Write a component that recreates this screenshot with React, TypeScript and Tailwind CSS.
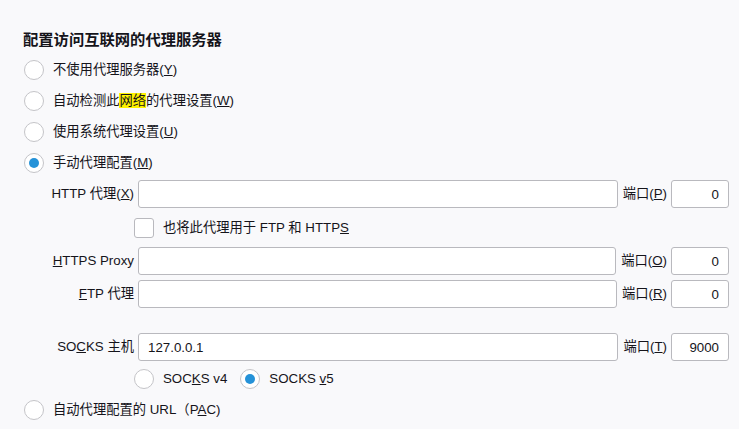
import React from 'react';

const Radio: React.FC<{ checked?: boolean }> = ({ checked }) => (
  <span className="flex h-[20px] w-[20px] shrink-0 items-center justify-center rounded-full border-[1.5px] border-[#c4c4c8] bg-white">
    {checked && <span className="h-[10px] w-[10px] rounded-full bg-[#2592d8]" />}
  </span>
);

const RadioRow: React.FC<{ checked?: boolean; children: React.ReactNode }> = ({ checked, children }) => (
  <div className="flex h-[31px] items-center pl-[24px]">
    <Radio checked={checked} />
    <span className="ml-[9px]">{children}</span>
  </div>
);

const ProxyRow: React.FC<{
  label: React.ReactNode;
  value?: string;
  portLabel: React.ReactNode;
  port: string;
  className?: string;
}> = ({ label, value = '', portLabel, port, className = '' }) => (
  <div className={`flex h-[28px] items-center pr-[10px] ${className}`}>
    <div className="w-[138px] shrink-0 pr-[4px] text-right">{label}</div>
    <input
      readOnly
      value={value}
      className="h-[28px] min-w-0 flex-1 rounded-[3px] border border-[#b9b9be] bg-white pl-[9px] text-[#15141a] outline-none"
    />
    <span className="ml-[5px] mr-[4px] shrink-0">{portLabel}</span>
    <input
      readOnly
      value={port}
      className="h-[28px] w-[58px] shrink-0 rounded-[3px] border border-[#b9b9be] bg-white pr-[9px] text-right text-[#15141a] outline-none"
    />
  </div>
);

export default function App() {
  return (
    <div
      className="h-[429px] w-[739px] overflow-hidden bg-[#f9f9fb] text-[13.3px] leading-[20px] text-[#15141a]"
      style={{ fontFamily: '"Liberation Sans", "Noto Sans CJK SC", sans-serif' }}
    >
      <div className="pt-[29px]">
        <h1 className="pl-[23px] text-[15.3px] font-bold leading-[22px]">配置访问互联网的代理服务器</h1>
        <div className="mt-[3px]">
          <RadioRow>不使用代理服务器(<u>Y</u>)</RadioRow>
          <RadioRow>
            自动检测此<span className="bg-[#fff200]">网络</span>的代理设置(<u>W</u>)
          </RadioRow>
          <RadioRow>使用系统代理设置(<u>U</u>)</RadioRow>
          <RadioRow checked>手动代理配置(<u>M</u>)</RadioRow>
        </div>

        <ProxyRow
          className="mt-[2px]"
          label={<>HTTP 代理(<u>X</u>)</>}
          portLabel={<>端口(<u>P</u>)</>}
          port="0"
        />

        <div className="mt-[10px] flex h-[20px] items-center pl-[134px]">
          <span className="h-[20px] w-[20px] shrink-0 rounded-[3px] border border-[#b9b9be] bg-white" />
          <span className="ml-[9px]">
            也将此代理用于 FTP 和 HTTP<u>S</u>
          </span>
        </div>

        <ProxyRow
          className="mt-[9px]"
          label={<><u>H</u>TTPS Proxy</>}
          portLabel={<>端口(<u>O</u>)</>}
          port="0"
        />
        <ProxyRow
          className="mt-[5px]"
          label={<><u>F</u>TP 代理</>}
          portLabel={<>端口(<u>R</u>)</>}
          port="0"
        />
        <ProxyRow
          className="mt-[25px]"
          label={<>SO<u>C</u>KS 主机</>}
          value="127.0.0.1"
          portLabel={<>端口(<u>T</u>)</>}
          port="9000"
        />

        <div className="mt-[8px] flex h-[20px] items-center pl-[134px]">
          <Radio />
          <span className="ml-[9px]">
            SOC<u>K</u>S v4
          </span>
          <span className="ml-[13px]">
            <Radio checked />
          </span>
          <span className="ml-[9px]">
            SOCKS <u>v</u>5
          </span>
        </div>

        <div className="mt-[11px] flex h-[20px] items-center pl-[24px]">
          <Radio />
          <span className="ml-[9px]">
            自动代理配置的 URL（P<u>A</u>C)
          </span>
        </div>
      </div>
    </div>
  );
}
